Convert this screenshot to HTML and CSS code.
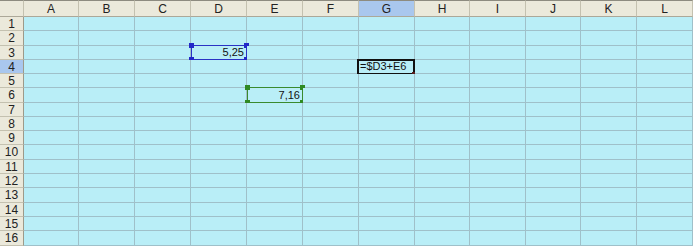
FILE: index.html
```html
<!DOCTYPE html>
<html lang="en">
<head>
    <meta charset="UTF-8">
    <title>Sheet</title>
    <link rel="stylesheet" href="styles.css">
</head>
<body>
    <div class="sheet" id="sheet"></div>

    <script>
        var cols = 'ABCDEFGHIJKL'.split('');
        var rows = 16;

        // Cells with content, and how they are marked
        var data = {
            D3: { text: '5,25', mark: 'ref-blue' },
            E6: { text: '7,16', mark: 'ref-green' },
            G4: { text: '=$D3+E6', mark: 'active', left: true }
        };
        var activeCol = 'G';
        var activeRow = 4;

        var sheet = document.getElementById('sheet');

        function cell(cls, text) {
            var div = document.createElement('div');
            div.className = cls;
            if (text) div.textContent = text;
            sheet.appendChild(div);
            return div;
        }

        function addBox(el, mark) {
            var box = document.createElement('span');
            box.className = 'box ' + mark;
            var corners = mark === 'active' ? ['br'] : ['tl', 'tr', 'bl', 'br'];
            corners.forEach(function (c) {
                var h = document.createElement('span');
                h.className = 'handle ' + c;
                box.appendChild(h);
            });
            el.appendChild(box);
        }

        cell('head corner');
        cols.forEach(function (c) {
            cell('head col' + (c === activeCol ? ' hl' : ''), c);
        });

        for (var r = 1; r <= rows; r++) {
            cell('head rowh' + (r === activeRow ? ' hl' : ''), String(r));
            cols.forEach(function (c) {
                var d = data[c + r];
                var el = cell('c' + (d && d.left ? ' left' : ''));
                if (d) {
                    var t = document.createElement('span');
                    t.className = 'val';
                    t.textContent = d.text;
                    el.appendChild(t);
                    addBox(el, d.mark);
                }
            });
        }
    </script>
</body>
</html>
```

FILE: styles.css
```css
body {
    margin: 0;
    overflow: hidden;
    background: #b9eef7;
    font-family: 'Liberation Sans', Arial, sans-serif;
    font-size: 11px;
    color: #111;
}
.sheet {
    display: grid;
    width: 693px;
    height: 246px;
    grid-template-columns: 24px 55px 56px 56px 56px 56px 56px 56px 55px 56px 55px 56px 56px;
    grid-template-rows: 17px 14px 15px 14px 14px 14px 15px 14px 14px 14px 15px 14px 14px 15px 14px 14px 15px;
}
.head {
    box-sizing: border-box;
    background: #ebe9db;
    border-right: 1px solid #c4c1b0;
    border-bottom: 1px solid #aca899;
    color: #222;
    display: flex;
    align-items: center;
    justify-content: center;
    line-height: 12px;
    font-size: 12px;
}
.head.corner,
.head.col {
    border-top: 1px solid #8d8b80;
    padding-top: 1px;
}
.head.rowh {
    border-right: 1px solid #9d9a8a;
    border-bottom: 1px solid #c4c1b0;
}
.head.hl {
    background: #a9c7ee;
}
.c {
    position: relative;
    box-sizing: border-box;
    background: #b9eef7;
    border-right: 1px solid #9fc0c9;
    border-bottom: 1px solid #9fc0c9;
    display: flex;
    align-items: flex-end;
    justify-content: flex-end;
    padding: 0 2px 0 1px;
}
.c.left {
    justify-content: flex-start;
}
.val {
    line-height: 13px;
    white-space: nowrap;
}
.box {
    position: absolute;
    top: -1px;
    left: 0;
    right: -1px;
    bottom: -1px;
    border: 1px solid;
}
.box.ref-blue {
    border-color: #2a32c4;
}
.box.ref-green {
    border-color: #3a8a2e;
}
.box.active {
    top: -1px;
    left: -2px;
    right: -1px;
    bottom: -2px;
    border: 2px solid #111;
}
.handle {
    position: absolute;
    width: 5px;
    height: 5px;
}
.ref-blue .handle {
    background: #2228c8;
}
.ref-green .handle {
    background: #2f8a22;
}
.active .handle {
    background: #5a1c1c;
    width: 4px;
    height: 4px;
}
.handle.tl { top: -3px; left: -3px; }
.handle.tr { top: -3px; right: -3px; }
.handle.bl { bottom: -3px; left: -3px; }
.handle.br { bottom: -3px; right: -3px; }
.active .handle.br { bottom: -3px; right: -3px; }
```
